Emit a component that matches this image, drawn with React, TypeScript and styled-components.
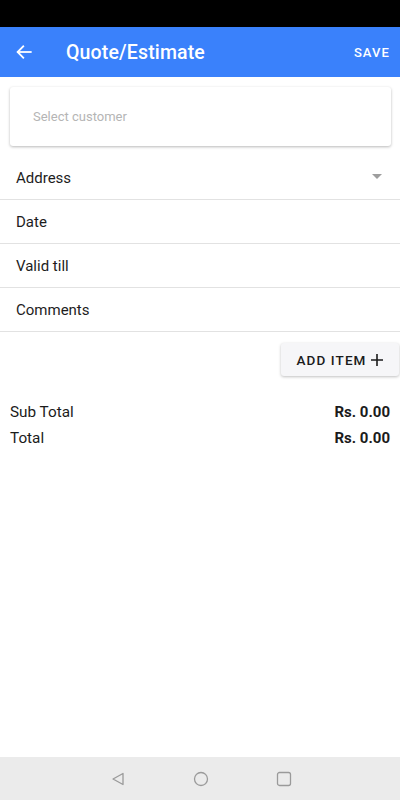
import React from "react";
import styled, { createGlobalStyle } from "styled-components";

const Global = createGlobalStyle`
  html, body { margin: 0; padding: 0; background: #fff; }
  body { font-family: Roboto, "Noto Sans", sans-serif; }
  * { box-sizing: border-box; }
`;

const Screen = styled.div`
  width: 400px;
  height: 800px;
  display: flex;
  flex-direction: column;
  background: #fff;
  overflow: hidden;
`;

const StatusBar = styled.div`
  height: 27px;
  background: #000;
  flex-shrink: 0;
`;

const AppBar = styled.div`
  height: 50px;
  background: #3a81fb;
  display: flex;
  align-items: center;
  padding: 0 10px 0 15px;
  color: #fff;
  flex-shrink: 0;
`;

const BackIcon = styled.svg`
  width: 18px;
  height: 18px;
  flex-shrink: 0;
`;

const Title = styled.div`
  margin-left: 33px;
  font-size: 19.5px;
  font-weight: 500;
  flex: 1;
  letter-spacing: 0.15px;
`;

const Save = styled.div`
  font-size: 13px;
  font-weight: 500;
  letter-spacing: 1.1px;
`;

const Body = styled.div`
  flex: 1;
  display: flex;
  flex-direction: column;
`;

const Card = styled.div`
  margin: 10px 9px 0 10px;
  height: 59px;
  background: #fff;
  border-radius: 3px;
  box-shadow: 0 1px 3px rgba(0, 0, 0, 0.28);
  display: flex;
  align-items: center;
  padding-left: 23px;
  font-size: 13px;
  color: #b5b5b5;
`;

const Fields = styled.div`
  margin-top: 10px;
  display: flex;
  flex-direction: column;
`;

const Field = styled.div`
  height: 44px;
  display: flex;
  align-items: center;
  justify-content: space-between;
  padding: 0 18px 0 16px;
  font-size: 15px;
  color: #1d1d1d;
  border-bottom: 1px solid #e2e2e2;
`;

const Caret = styled.div`
  width: 0;
  height: 0;
  border-left: 5px solid transparent;
  border-right: 5px solid transparent;
  border-top: 5px solid #9e9e9e;
  margin-top: -2px;
`;

const ButtonRow = styled.div`
  display: flex;
  justify-content: flex-end;
  padding: 11px 1px 0 0;
`;

const AddButton = styled.div`
  width: 118px;
  height: 33px;
  background: #f6f6f8;
  border-radius: 3px;
  box-shadow: 0 1px 3px rgba(0, 0, 0, 0.25);
  display: flex;
  align-items: center;
  justify-content: center;
  gap: 3px;
  font-size: 13.5px;
  font-weight: 500;
  letter-spacing: 1.1px;
  color: #1b1b1b;
`;

const Totals = styled.div`
  margin-top: 27px;
  padding: 0 10px;
  display: flex;
  flex-direction: column;
  gap: 8px;
`;

const TotalRow = styled.div`
  display: flex;
  justify-content: space-between;
  align-items: center;
  font-size: 15.3px;
  color: #1b1b1b;
  height: 18px;
`;

const Amount = styled.span`
  font-weight: 700;
  font-size: 15px;
`;

const NavBar = styled.div`
  height: 43px;
  background: #ebebeb;
  display: flex;
  align-items: center;
  justify-content: center;
  gap: 67px;
  flex-shrink: 0;
  padding-left: 2px;
`;

const NavIcon = styled.svg`
  width: 16px;
  height: 16px;
`;

export default function App() {
  return (
    <Screen>
      <Global />
      <StatusBar />
      <AppBar>
        <BackIcon viewBox="0 0 24 24" fill="none" stroke="#fff" strokeWidth="2.4" strokeLinecap="square">
          <path d="M21 12H4" />
          <path d="M11 4.5L3.5 12l7.5 7.5" />
        </BackIcon>
        <Title>Quote/Estimate</Title>
        <Save>SAVE</Save>
      </AppBar>
      <Body>
        <Card>Select customer</Card>
        <Fields>
          <Field>
            Address
            <Caret />
          </Field>
          <Field>Date</Field>
          <Field>Valid till</Field>
          <Field>Comments</Field>
        </Fields>
        <ButtonRow>
          <AddButton>
            ADD ITEM
            <svg width="14" height="14" viewBox="0 0 14 14" stroke="#1b1b1b" strokeWidth="1.6">
              <path d="M7 1v12M1 7h12" />
            </svg>
          </AddButton>
        </ButtonRow>
        <Totals>
          <TotalRow>
            Sub Total
            <Amount>Rs. 0.00</Amount>
          </TotalRow>
          <TotalRow>
            Total
            <Amount>Rs. 0.00</Amount>
          </TotalRow>
        </Totals>
      </Body>
      <NavBar>
        <NavIcon viewBox="0 0 16 16" fill="none" stroke="#9a9a9a" strokeWidth="1.3">
          <path d="M13 2.5L3 8l10 5.5z" strokeLinejoin="round" />
        </NavIcon>
        <NavIcon viewBox="0 0 16 16" fill="none" stroke="#9a9a9a" strokeWidth="1.3">
          <circle cx="8" cy="8" r="6.5" />
        </NavIcon>
        <NavIcon viewBox="0 0 16 16" fill="none" stroke="#9a9a9a" strokeWidth="1.3">
          <rect x="1.5" y="1.5" width="13" height="13" rx="2" />
        </NavIcon>
      </NavBar>
    </Screen>
  );
}
